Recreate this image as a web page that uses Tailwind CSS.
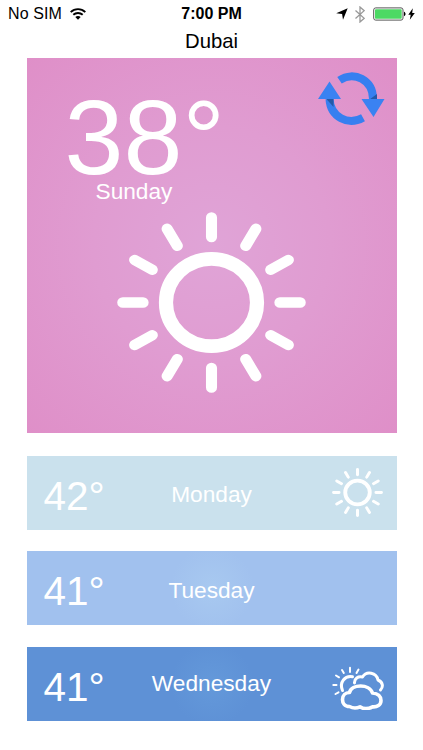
<!DOCTYPE html>
<html lang="en">
<head>
<meta charset="utf-8">
<title>Weather</title>
<script src="https://cdn.jsdelivr.net/npm/@tailwindcss/browser@4"></script>
</head>
<body class="bg-white">
<svg class="hidden">
  <symbol id="sun" viewBox="-94.5 -90.5 189 181" preserveAspectRatio="none">
    <g transform="scale(1.044 1)" fill="none" stroke="#fff">
      <circle r="43.6" stroke-width="13.6"/>
      <g id="rays" stroke-width="10.6" stroke-linecap="round">
        <path d="M0-65.5V-85M0 65.5V85M-65.5 0H-85M65.5 0H85"/>
        <path transform="rotate(30)" d="M0-65.5V-85M0 65.5V85M-65.5 0H-85M65.5 0H85"/>
        <path transform="rotate(60)" d="M0-65.5V-85M0 65.5V85M-65.5 0H-85M65.5 0H85"/>
      </g>
    </g>
  </symbol>
</svg>
<div class="w-[423px] h-[750px] overflow-hidden bg-white font-['Liberation_Sans',Arial,sans-serif] flex flex-col">
  <header class="h-7 shrink-0 grid grid-cols-3 items-center text-black">
    <div class="flex items-center pl-2 gap-2">
      <span class="text-[16px] leading-7 tracking-[0.1px] whitespace-nowrap">No SIM</span>
      <svg class="w-4 h-3" viewBox="0 0 16 12" fill="none" stroke="#000" stroke-width="1.9"><path d="M.7 4.1C4.8.1 11.2.1 15.3 4.1M3.3 6.8c2.7-2.5 6.7-2.5 9.4 0"/><path d="M8 11.8 5.3 9.1c1.5-1.4 3.9-1.4 5.4 0z" fill="#000" stroke="none"/></svg>
    </div>
    <span class="text-center text-[16px] leading-7 font-bold whitespace-nowrap">7:00 PM</span>
    <div class="flex items-center justify-end pr-[8px]">
      <svg class="w-[12px] h-[12px] mr-[7px]" viewBox="0 0 12 12"><path d="M11.7.3 7 11.7 6.1 6 .2 5.2z"/></svg>
      <svg class="w-[10px] h-[17px] mr-[8px]" viewBox="0 0 10 17" fill="none" stroke="#999" stroke-width="1.3"><path d="M.5 4.5 9.2 12.3 5 16V1l4.2 3.7L.5 12.5"/></svg>
      <svg class="w-[33px] h-[14px] mr-[2px]" viewBox="0 0 33 14"><rect x=".7" y=".9" width="29.3" height="12.2" rx="2" fill="#fff" stroke="#555" stroke-width="1"/><rect x="2" y="2.2" width="26.7" height="9.6" rx=".8" fill="#4cd964"/><path d="M31 4.8c2 .7 2 3.7 0 4.4z"/></svg>
      <svg class="w-[7px] h-[12px]" viewBox="0 0 7 12"><path d="M4.8.2.3 6.8h2.4L1.8 11.8 6.8 5H4.2z"/></svg>
    </div>
  </header>
  <h1 class="h-[30px] shrink-0 text-center text-[20.3px] leading-[27px] text-black">Dubai</h1>
  <main class="pl-[26.5px] w-[396.5px]">
    <section class="h-[375px] flex flex-col text-white bg-[radial-gradient(circle_at_50%_50%,#e0a4d7_0%,#e09cd1_45%,#df8fc8_100%)]">
      <div class="flex justify-between h-[141px]">
        <div class="pl-[38px] pt-[35px] w-[200px]">
          <div class="text-[106px] leading-[88px] h-[88px] whitespace-nowrap">38°</div>
          <div class="pl-[31px] text-[22.7px] leading-[26px] -mt-[3px]">Sunday</div>
        </div>
        <svg class="w-[68px] h-[54px] mt-[14px] mr-[12px]" viewBox="0 0 68 54">
          <path d="M22.5 8.2C37-1.5 56 8 56 27" fill="none" stroke="#377ff0" stroke-width="8"/>
          <path d="M46 45.7C31 54 13.500 45 12.500 27" fill="none" stroke="#377ff0" stroke-width="8"/>
          <path d="M52.500 27.500 60 22v6H52z M8.500 26h8v9z" fill="#2459a8"/>
          <path d="M12.500 9.500 24 27H1z M44.500 27h23L56.500 45z" fill="#3a82f2"/>
        </svg>
      </div>
      <svg class="w-[189px] h-[181px] mt-[13px] mx-auto"><use href="#sun"/></svg>
    </section>
    <section class="mt-[23px] h-[73.5px] grid grid-cols-[120px_130px_120px] text-white bg-[#cae1ed]">
      <span class="pl-[17px] text-[40.5px] leading-[80px]">42°</span>
      <span class="text-center text-[22.7px] leading-[77px]">Monday</span>
      <svg class="w-[51px] h-[49px] mt-[12px] ml-[55px]"><use href="#sun"/></svg>
    </section>
    <section class="mt-[21px] h-[74px] grid grid-cols-[120px_130px_120px] text-white bg-[radial-gradient(circle_at_50%_50%,#a8c9f0_0%,#a1c1ee_22%)]">
      <span class="pl-[17px] text-[40.5px] leading-[81px]">41°</span>
      <span class="text-center text-[22.7px] leading-[79px]">Tuesday</span>
    </section>
    <section class="mt-[22px] h-[74px] grid grid-cols-[120px_130px_120px] text-white bg-[radial-gradient(circle_at_50%_50%,#6499da_0%,#5e91d6_22%)]">
      <span class="pl-[17px] text-[40.5px] leading-[81px]">41°</span>
      <span class="text-center text-[22.7px] leading-[73px]">Wednesday</span>
      <svg class="w-[52px] h-[44px] mt-[19px] ml-[55px]" viewBox="0 0 52 44" fill="none" stroke="#fff" stroke-linecap="round" stroke-linejoin="round">
        <path stroke-width="2" d="M1.300 19H4.500M3.500 28l3-1.700M4 9.500l3 1.800M10 4l1.800 3M18 1.700V6M26.500 3.500 24.500 7"/>
        <path stroke-width="3" d="M10.500 24.500C7 16 13 9.500 20.500 10.800"/>
        <path stroke-width="3" d="M22.500 17c-.3-4.500 3.500-7 8-6 4-6.500 14-4.500 15.500 3 5 2 5.500 7 2.500 10"/>
        <path stroke-width="3.600" d="M17.500 40.500c-5 0-7-3.500-7-7 0-4 3-7 7-7 2-8.500 20-9 23 0.500 5.500.5 8.500 3.500 8.500 7.500 0 4.500-4 6.800-8.500 6.300-4.500 2.400-9 2.400-12.500 0-3.500 1.700-7 1.700-10.500-.3z"/>
      </svg>
    </section>
  </main>
</div>
</body>
</html>
